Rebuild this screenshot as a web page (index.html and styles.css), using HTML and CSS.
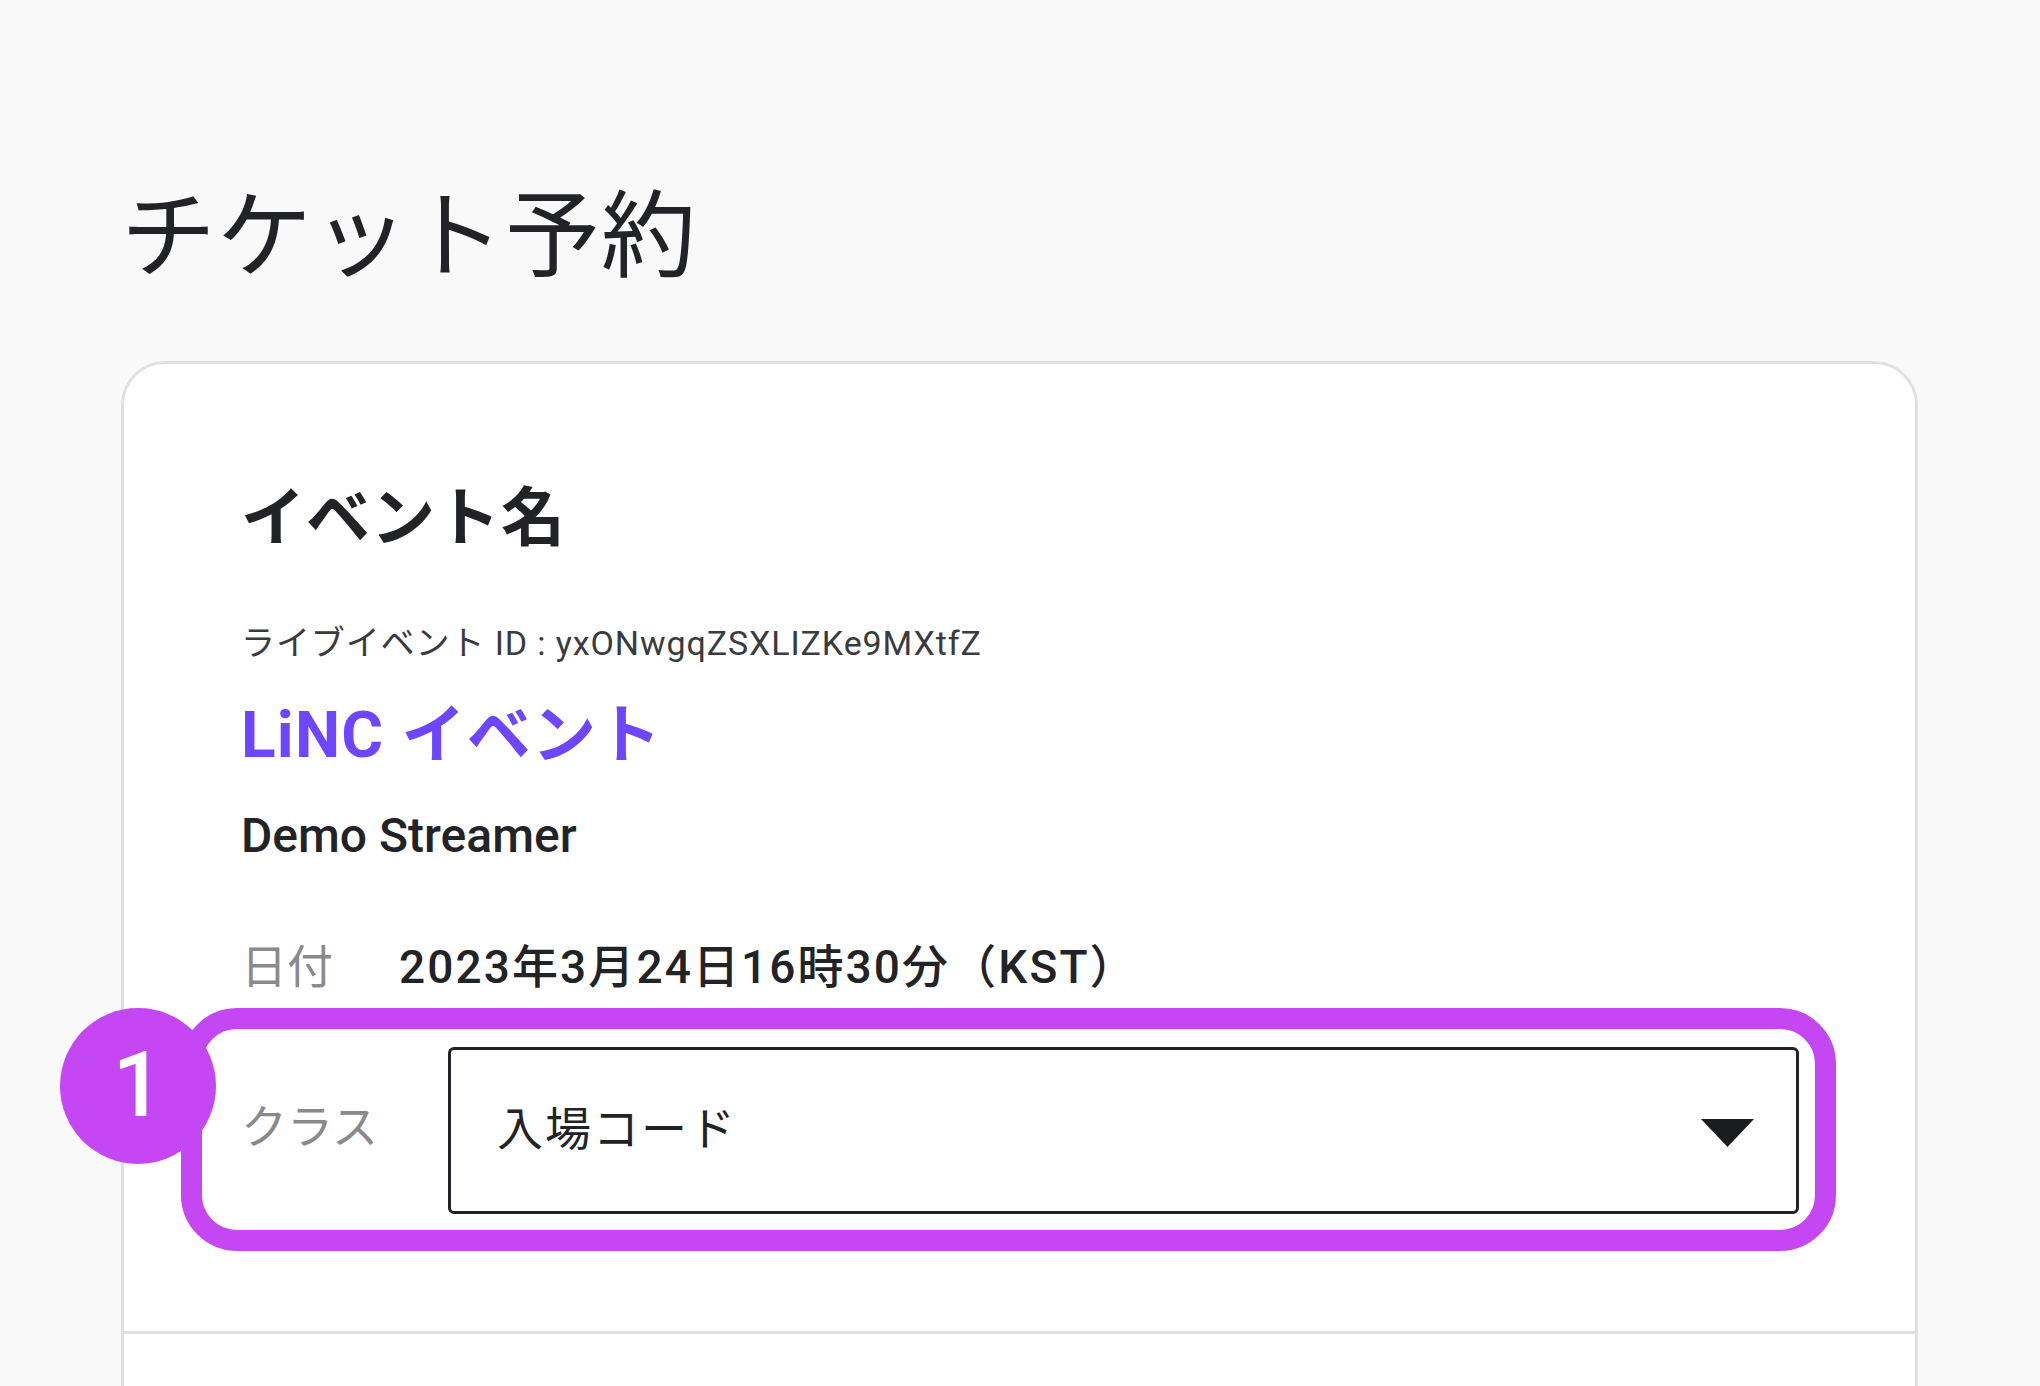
FILE: index.html
```html
<!DOCTYPE html>
<html>
<head>
  <meta charset="utf-8">
  <link rel="stylesheet" href="styles.css">
</head>
<body>
  <main class="page">
    <h1 class="page-title">チケット予約</h1>

    <section class="card">
      <div class="card-body">
        <h2 class="card-heading">イベント名</h2>
        <p class="event-id">ライブイベント ID : yxONwgqZSXLIZKe9MXtfZ</p>
        <p class="event-name">LiNC イベント</p>
        <p class="streamer">Demo Streamer</p>

        <div class="info-row date-row">
          <span class="info-label">日付</span>
          <span class="info-value">2023年3月24日16時30分（KST）</span>
        </div>

        <div class="info-row class-row">
          <span class="info-label">クラス</span>
          <div class="select-box">
            <span>入場コード</span>
            <svg class="caret" width="53" height="28" viewBox="0 0 53 28">
              <polygon points="0,0 53,0 26.5,28" fill="#1b1c1f"/>
            </svg>
          </div>
          <div class="highlight"></div>
          <div class="step-badge">1</div>
        </div>
      </div>
      <div class="card-body card-next"></div>
    </section>
  </main>
</body>
</html>
```

FILE: styles.css
```css
body {
  margin: 0;
  background-color: #f9f9f9;
  color: #222326;
  font-family: Roboto, "Noto Sans CJK JP", sans-serif;
  overflow: hidden;
}

.page {
  padding: 190px 122px 0 121px;
}

.page-title {
  margin: 0 0 76px;
  font-size: 95px;
  line-height: 95px;
  font-weight: 400;
  letter-spacing: 1px;
}

.card {
  background-color: #fff;
  border: 3px solid #e0e0e0;
  border-radius: 44px;
}

.card-body {
  padding: 123px 116px 117px 117px;
}

.card-next {
  border-top: 3px solid #e0e0e0;
  height: 200px;
}

.card-body p {
  margin: 0;
}

.card-heading {
  margin: 0;
  font-size: 64px;
  line-height: 64px;
  font-weight: 700;
  letter-spacing: 1px;
}

.event-id {
  margin-top: 75px !important;
  font-size: 34px;
  line-height: 34px;
  color: #3a3b3e;
  letter-spacing: 0.9px;
}

.event-name {
  margin-top: 44px !important;
  font-size: 64px;
  line-height: 64px;
  font-weight: 700;
  color: #6f46ff;
  letter-spacing: 1.2px;
}

.streamer {
  margin-top: 44px !important;
  font-size: 48px;
  line-height: 48px;
  font-weight: 500;
}

.info-row {
  display: flex;
  align-items: center;
  font-size: 46px;
  line-height: 46px;
}

.info-label {
  color: #8a8a8a;
  flex-shrink: 0;
}

.date-row {
  margin-top: 84px;
}

.date-row .info-label {
  width: 158px;
}

.info-value {
  font-weight: 500;
  letter-spacing: 2.1px;
}

.class-row {
  position: relative;
  margin-top: 57px;
}

.class-row .info-label {
  width: 207px;
  margin-top: -8px;
}

.select-box {
  flex: 1;
  height: 167px;
  box-sizing: border-box;
  display: flex;
  align-items: center;
  justify-content: space-between;
  padding: 0 42px 0 46px;
  border: 3px solid #222326;
  border-radius: 6px;
  color: #222326;
}

.select-box span {
  letter-spacing: 2px;
  margin-top: -3px;
}

.caret {
  margin-top: 4px;
}

/* annotation overlay */
.highlight {
  position: absolute;
  top: -39px;
  bottom: -37px;
  left: -60px;
  right: -37px;
  border: 21px solid #c547f3;
  border-radius: 56px;
  pointer-events: none;
}

.step-badge {
  position: absolute;
  top: -39px;
  left: -181px;
  width: 156px;
  height: 156px;
  border-radius: 50%;
  background-color: #c547f3;
  color: #fff;
  font-size: 90px;
  font-weight: 500;
  display: flex;
  align-items: center;
  justify-content: center;
  z-index: 1;
}
```
